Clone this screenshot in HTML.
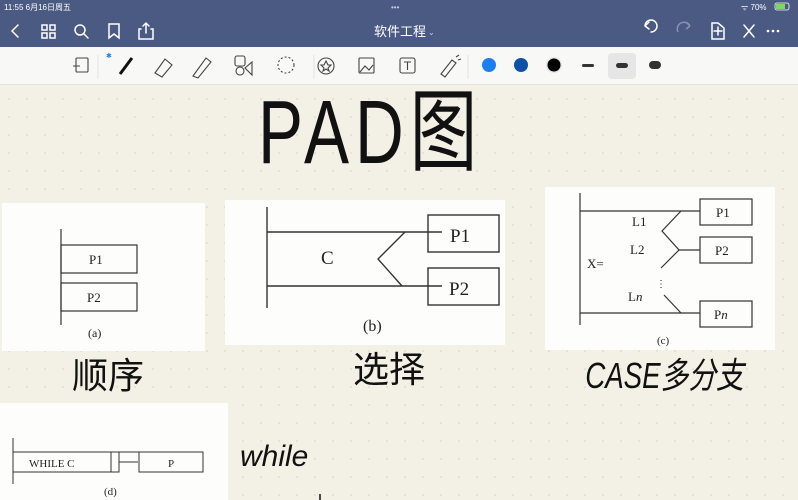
<!DOCTYPE html>
<html><head><meta charset="utf-8"><style>
html,body{margin:0;padding:0;width:798px;height:500px;overflow:hidden;font-family:"Liberation Sans","Noto Sans CJK SC",sans-serif}
</style></head><body>
<svg width="798" height="500" viewBox="0 0 798 500" xmlns="http://www.w3.org/2000/svg" font-family="Liberation Sans, Noto Sans CJK SC, sans-serif">
<defs>
<pattern id="dots" x="0" y="0" width="18" height="18" patternUnits="userSpaceOnUse">
<circle cx="9" cy="9" r="0.8" fill="#d2cec2"/>
</pattern>
</defs>
<rect width="798" height="500" fill="#f3f0e5"/>
<rect y="85" width="798" height="415" fill="url(#dots)"/>
<!-- header -->
<rect width="798" height="47" fill="#4b5a83"/>
<text x="4" y="10" font-size="8" fill="#fff">11:55  6月16日周五</text>
<text x="391" y="10" font-size="8" fill="#c8cde0">•••</text>
<text x="741" y="10" font-size="8" fill="#fff">ᯤ 70%</text>
<rect x="775" y="3" width="14" height="7" rx="2" fill="none" stroke="#fff" stroke-width="0.8"/><rect x="776" y="4" width="9" height="5" fill="#7bd66b"/>
<g stroke="#fff" stroke-width="1.5" fill="none" stroke-linecap="round">
<path d="M18 25 L12 31 L18 37"/>
<rect x="42" y="25" width="5" height="5"/><rect x="50" y="25" width="5" height="5"/><rect x="42" y="33" width="5" height="5"/><rect x="50" y="33" width="5" height="5"/>
<circle cx="80" cy="30" r="5"/><path d="M84 34 L88 38"/>
<path d="M109 24 V38 L114 34 L119 38 V24 Z"/>
<path d="M141 29 H139 V39 H153 V29 H151 M146 33 V23 M143 26 L146 23 L149 26"/>
<path d="M651 32 A6 6 0 1 0 645 26 M645 26 L649 22 M645 26 L649 29"/>
<path d="M718 23 H712 V39 H724 V28 Z M718 27 V35 M714 31 H722"/>
<path d="M744 25 L754 37 M754 25 L744 37"/>
</g>
<path stroke="#8793b1" stroke-width="1.5" fill="none" d="M678 32 A6 6 0 1 1 690 26 M690 26 L686 22 M690 26 L686 29"/>
<circle cx="768" cy="31" r="1.3" fill="#fff"/><circle cx="773" cy="31" r="1.3" fill="#fff"/><circle cx="778" cy="31" r="1.3" fill="#fff"/>
<text x="374" y="36" font-size="13" fill="#fff">软件工程</text>
<text x="428" y="35" font-size="8" fill="#ccd">⌄</text>
<!-- toolbar -->
<rect y="47" width="798" height="38" fill="#f8f8f6"/>
<rect y="84" width="798" height="1" fill="#e4e2da"/>
<rect x="608" y="53" width="28" height="26" rx="4" fill="#e6e6e6"/>
<g stroke="#444" stroke-width="1.1" fill="none">
<rect x="76" y="58" width="12" height="14" rx="1"/>
<path d="M120 74 L132 58" stroke="#111" stroke-width="3"/>
<path d="M155 73 L165 59 L172 65 L162 77 Z"/>
<path d="M193 76 L206 58 L211 62 L198 78 Z"/>
<rect x="235" y="56" width="10" height="10" rx="2"/><circle cx="240" cy="71" r="4"/><path d="M245 68 L252 62 V75 Z"/>
<circle cx="286" cy="65" r="8" stroke-dasharray="2 2"/>
<circle cx="326" cy="66" r="8"/><path d="M326 61 L328 65 L331 65 L328 68 L329 71 L326 69 L323 71 L324 68 L321 65 L324 65 Z"/>
<rect x="359" y="58" width="15" height="15" rx="1"/><path d="M360 72 L365 66 L369 70 L373 65"/>
<rect x="400" y="58" width="15" height="15" rx="2"/><path d="M404 62 H411 M407.5 62 V70"/>
<path d="M441 74 L452 60 L456 63 L445 77 Z M456 57 L459 55 M458 60 L461 59"/>
</g>
<path d="M73 66 H80" stroke="#444"/>
<text x="106" y="58" font-size="7" fill="#1a7ef0">✱</text>
<path d="M314 55 V79" stroke="#e2e2e2"/><path d="M468 55 V79" stroke="#e2e2e2"/><path d="M98 55 V79" stroke="#e2e2e2"/>
<circle cx="489" cy="65" r="7" fill="#1b7ff0"/>
<circle cx="521" cy="65" r="7" fill="#0d52a6"/>
<circle cx="554" cy="65" r="8" fill="#e6e6e6"/><circle cx="554" cy="65" r="6.5" fill="#000"/>
<rect x="582" y="64" width="12" height="3" rx="1.5" fill="#333"/>
<rect x="616" y="63" width="12" height="5" rx="2.5" fill="#333"/>
<rect x="649" y="61" width="12" height="8" rx="4" fill="#333"/>
<!-- title -->
<text x="344" y="163" font-size="90" fill="#111" letter-spacing="8" transform="scale(0.75,1)">PAD图</text>
<!-- panel a -->
<rect x="2" y="203" width="203" height="148" fill="#fdfdfb"/>
<g stroke="#333" stroke-width="1.2" fill="none">
<path d="M61 229 V325"/>
<rect x="61" y="245" width="76" height="28"/>
<rect x="61" y="283" width="76" height="28"/>
</g>
<g font-family="Liberation Serif, serif" fill="#222">
<text x="89" y="264" font-size="13">P1</text>
<text x="87" y="302" font-size="13">P2</text>
<text x="88" y="337" font-size="12">(a)</text>
</g>
<!-- panel b -->
<rect x="225" y="200" width="280" height="145" fill="#fdfdfb"/>
<g stroke="#333" stroke-width="1.4" fill="none">
<path d="M267 207 V308"/>
<path d="M267 232 H442 M267 286 H442"/>
<path d="M405 232 L378 259 L402 286"/>
<rect x="428" y="215" width="71" height="37"/>
<rect x="428" y="268" width="71" height="37"/>
</g>
<g font-family="Liberation Serif, serif" fill="#222">
<text x="321" y="264" font-size="19">C</text>
<text x="450" y="242" font-size="19">P1</text>
<text x="449" y="295" font-size="19">P2</text>
<text x="363" y="331" font-size="16">(b)</text>
</g>
<!-- panel c -->
<rect x="545" y="187" width="230" height="163" fill="#fdfdfb"/>
<g stroke="#333" stroke-width="1.2" fill="none">
<path d="M580 193 V325"/>
<path d="M580 211 H700 M580 313 H700"/>
<path d="M681 211 L662 231 L679 250 L661 268"/>
<path d="M679 250 H700"/>
<path d="M664 295 L681 313"/>
<rect x="700" y="199" width="52" height="26"/>
<rect x="700" y="237" width="52" height="26"/>
<rect x="700" y="301" width="52" height="26"/>
</g>
<g font-family="Liberation Serif, serif" fill="#222" font-size="13">
<text x="632" y="226">L1</text>
<text x="630" y="254">L2</text>
<text x="587" y="268">X=</text>
<text x="656" y="287" font-size="10">⋮</text>
<text x="628" y="301">L<tspan font-style="italic">n</tspan></text>
<text x="716" y="217">P1</text>
<text x="715" y="255">P2</text>
<text x="714" y="319">P<tspan font-style="italic">n</tspan></text>
<text x="657" y="344" font-size="11">(c)</text>
</g>
<!-- panel d -->
<rect x="0" y="403" width="228" height="97" fill="#fdfdfb"/>
<g stroke="#333" stroke-width="1" fill="none">
<path d="M13 438 V484"/>
<rect x="13" y="452" width="106" height="20"/>
<path d="M111 452 V472 M119 452 H139 V472"/>
<path d="M119 462 H138"/>
<rect x="139" y="452" width="64" height="20"/>
</g>
<g font-family="Liberation Serif, serif" fill="#222">
<text x="29" y="467" font-size="11">WHILE C</text>
<text x="168" y="467" font-size="11">P</text>
<text x="104" y="495" font-size="11">(d)</text>
</g>
<!-- handwriting labels -->
<g fill="#111">
<text x="72" y="388" font-size="36">顺序</text>
<text x="353" y="382" font-size="36">选择</text>
<text x="760" y="388" font-size="36" font-style="italic" transform="scale(0.77,1)">CASE多分支</text>
<text x="240" y="466" font-size="30" font-style="italic">while</text>
</g>
<path d="M320 494 V500" stroke="#111" stroke-width="1.5"/>
</svg>
</body></html>
